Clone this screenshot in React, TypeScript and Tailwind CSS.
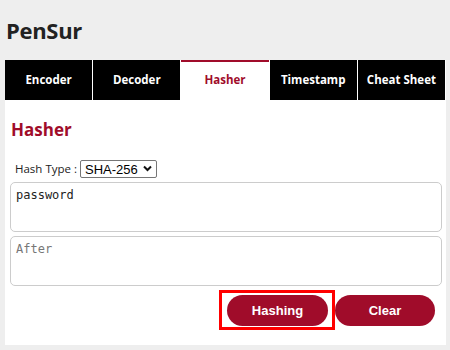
import { useState } from 'react'

const tabs = ['Encoder', 'Decoder', 'Hasher', 'Timestamp', 'Cheat Sheet']

export default function App() {
  const [active, setActive] = useState('Hasher')
  const [input, setInput] = useState('password')
  const [output, setOutput] = useState('')
  const [algo, setAlgo] = useState('SHA-256')

  return (
    <div className="w-[450px] h-[350px] bg-[#eeeeee] overflow-hidden font-['Open_Sans',sans-serif]">
      <h1 className="pl-[6px] pt-[15px] h-[60px] text-[22px] font-bold text-[#222] leading-[30px] tracking-[-0.3px]">PenSur</h1>
      <div className="ml-[5px] w-[441px] h-[285px] bg-white flex flex-col">
        <div className="w-[440px] h-[40px] grid grid-cols-5 gap-px bg-white">
          {tabs.map((t) => (
            <button
              key={t}
              onClick={() => setActive(t)}
              className={
                t === active
                  ? 'h-[40px] bg-white border-t-2 border-[#a00c2a] text-[#a00c2a] text-[11.5px] font-bold pb-[2px]'
                  : 'h-[40px] bg-black text-white text-[11.5px] font-bold'
              }
            >
              {t}
            </button>
          ))}
        </div>
        <div className="px-[5px] flex flex-col">
          <h2 className="pt-[18px] h-[58px] pl-[1px] text-[17px] font-bold text-[#a00c2a] leading-[24px]">Hasher</h2>
          <div className="flex items-center h-[24px] pl-[5px] pb-[2px]">
            <span className="text-[11.5px] text-[#222] mr-[3px]">Hash Type :</span>
            <div className="relative">
              <select
                value={algo}
                onChange={(e) => setAlgo(e.target.value)}
                className="appearance-none block w-[77px] h-[18px] border border-[#767676] rounded-[2px] text-[13px] font-['Liberation_Sans',sans-serif] leading-none pl-[4px] text-black bg-white outline-none"
              >
                <option>MD5</option>
                <option>SHA-1</option>
                <option>SHA-256</option>
                <option>SHA-512</option>
              </select>
              <svg
                className="absolute right-[5px] top-[5px] pointer-events-none"
                width="9"
                height="7"
                viewBox="0 0 9 7"
              >
                <path d="M1 1.5 L4.5 5 L8 1.5" fill="none" stroke="#111" strokeWidth="2" />
              </svg>
            </div>
          </div>
          <textarea
            value={input}
            onChange={(e) => setInput(e.target.value)}
            className="w-[432px] h-[50px] border border-[#cccccc] rounded-[5px] resize-none px-[5px] py-[3px] text-[12px] font-['DejaVu_Sans_Mono',monospace] text-[#222] outline-none"
          />
          <textarea
            value={output}
            readOnly
            placeholder="After"
            className="mt-[4px] w-[432px] h-[50px] border border-[#cccccc] rounded-[5px] resize-none px-[5px] py-[3px] text-[12px] font-['DejaVu_Sans_Mono',monospace] text-[#222] placeholder:text-[#777] outline-none"
          />
          <div className="flex justify-end gap-[7px] pr-[6px] mt-[9px]">
            <div className="relative">
              <button
                onClick={() => setOutput(algo + ':' + input)}
                className="w-[101px] h-[31px] rounded-full bg-[#a00c2a] text-white text-[13px] font-bold font-['Liberation_Sans',sans-serif]"
              >
                Hashing
              </button>
              <div className="absolute left-[-8px] right-[-7px] top-[-5px] bottom-[-4px] border-[3px] border-[#ff0000] pointer-events-none" />
            </div>
            <button
              onClick={() => {
                setInput('')
                setOutput('')
              }}
              className="w-[100px] h-[31px] rounded-full bg-[#a00c2a] text-white text-[13px] font-bold font-['Liberation_Sans',sans-serif]"
            >
              Clear
            </button>
          </div>
        </div>
      </div>
    </div>
  )
}
